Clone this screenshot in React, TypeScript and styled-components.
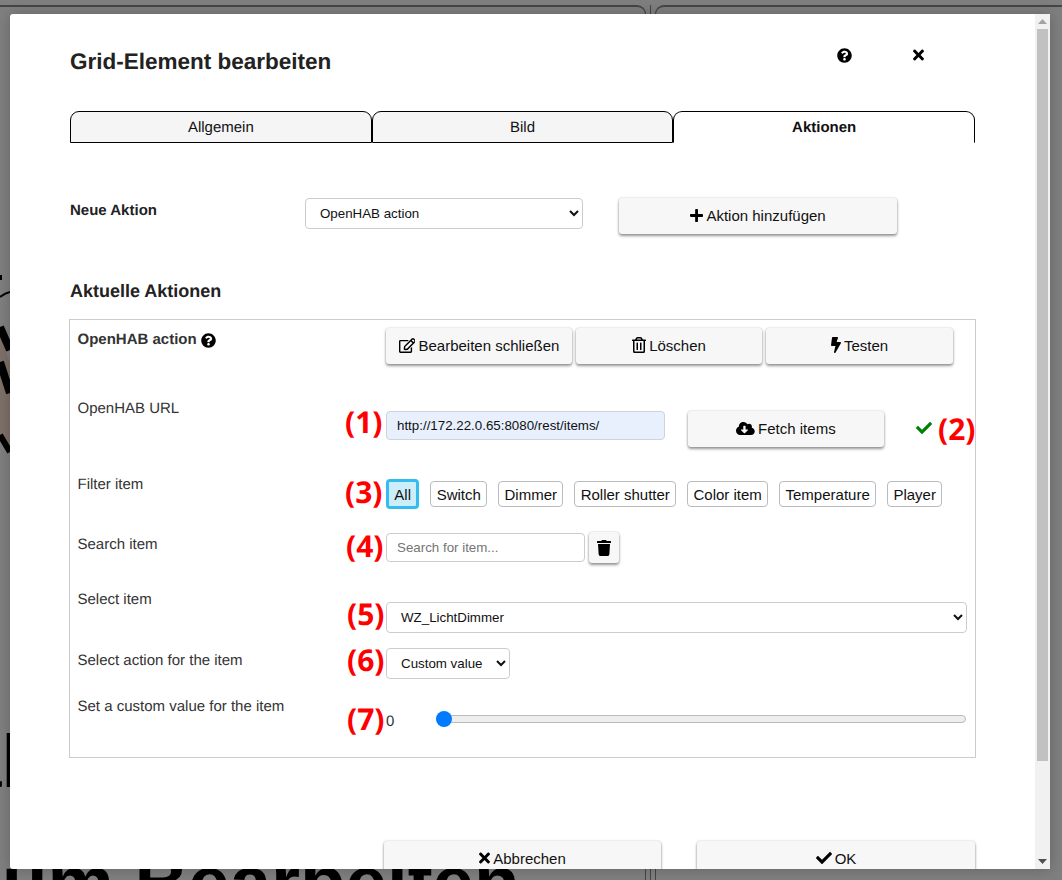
import React from "react";
import styled, { createGlobalStyle } from "styled-components";
import {
  FaBolt,
  FaCheck,
  FaCloudDownloadAlt,
  FaPlus,
  FaQuestionCircle,
  FaRegEdit,
  FaRegTrashAlt,
  FaTimes,
  FaTrash,
} from "react-icons/fa";

const Global = createGlobalStyle`
  html, body { margin: 0; padding: 0; height: 100%; overflow: hidden; }
  body {
    font-family: "Liberation Sans", Arial, sans-serif;
    font-size: 15px;
    color: #222;
    text-rendering: geometricPrecision;
  }
  * { box-sizing: border-box; }
`;

const Backdrop = styled.div`
  position: fixed;
  inset: 0;
  display: flex;
  padding-top: 5px;
  background: #7f7f7f;
  overflow: hidden;
`;
const LeftCard = styled.div`
  position: relative;
  width: 646px;
  flex: none;
  border-top: 2px solid #454545;
  border-right: 1px solid #454545;
  border-top-right-radius: 9px;
`;
const Divider = styled.div`
  width: 1px;
  flex: none;
  margin: 0 4px;
  background: #454545;
`;
const RightCard = styled.div`
  flex: 1;
  border-top: 2px solid #454545;
  border-left: 1px solid #454545;
  border-top-left-radius: 9px;
`;
const BigLine = styled.div<{ $top: number; $left: number }>`
  position: absolute;
  top: ${(p) => p.$top}px;
  left: ${(p) => p.$left}px;
  font-size: 74.5px;
  font-weight: 700;
  line-height: 86px;
  white-space: nowrap;
  color: #000;
`;
const BackLogo = styled.svg`
  position: absolute;
  left: 0;
  top: 258px;
`;

const Modal = styled.div`
  position: fixed;
  left: 10px;
  top: 14px;
  width: 1040px;
  height: 855px;
  display: flex;
  background: #fff;
  border-radius: 3px 0 0 3px;
  box-shadow: 0 0 14px rgba(0, 0, 0, 0.22);
  overflow: hidden;
`;
const Content = styled.div`
  flex: 1;
  min-width: 0;
  height: 963px;
  padding: 34px 60px 0 60px;
`;
const Rail = styled.div`
  width: 15px;
  flex: none;
  display: flex;
  flex-direction: column;
  background: #f1f1f1;
`;
const RailEnd = styled.div`
  height: 15px;
  display: flex;
  align-items: center;
  justify-content: center;
  flex: none;
`;
const Thumb = styled.div`
  width: 11px;
  height: 732px;
  margin-left: 2px;
  flex: none;
  background: #c1c1c1;
`;
const RailGap = styled.div`
  flex: 1;
`;
const Header = styled.div`
  display: flex;
  align-items: flex-start;
  height: 28px;
`;
const Title = styled.h1`
  flex: 1;
  margin: 0;
  font-size: 22.5px;
  line-height: 28px;
  font-weight: 700;
  color: #222;
`;
const HeaderIcons = styled.div`
  display: flex;
  gap: 61px;
  margin-right: 51px;
  margin-top: -1px;
  height: 16px;
  align-items: center;
`;
const Tabs = styled.div`
  display: flex;
  margin-top: 35px;
`;
const Tab = styled.div<{ $active?: boolean }>`
  flex: 1;
  height: 32px;
  line-height: 32px;
  text-align: center;
  font-size: 15px;
  color: #111;
  border: 1px solid #000;
  border-radius: 9px 9px 0 0;
  background: ${(p) => (p.$active ? "#fff" : "#f5f5f5")};
  font-weight: ${(p) => (p.$active ? 700 : 400)};
  border-bottom-color: ${(p) => (p.$active ? "transparent" : "#000")};
`;
const NewRow = styled.div`
  display: flex;
  align-items: flex-start;
  margin-top: 55px;
`;
const NewLabel = styled.div`
  width: 235px;
  padding-top: 3px;
  font-weight: 700;
  line-height: 20px;
  color: #222;
`;
const Select = styled.select<{ $width: number }>`
  display: block;
  width: ${(p) => p.$width}px;
  height: 31px;
  padding: 0 10px;
  font-family: "Liberation Sans", Arial, sans-serif;
  font-size: 13.33px;
  color: #111;
  background: #fff;
  border: 1px solid #ccc;
  border-radius: 4px;
`;
const Button = styled.button<{ $width: number; $ml?: number }>`
  display: flex;
  align-items: center;
  justify-content: center;
  gap: 3px;
  width: ${(p) => p.$width}px;
  height: 36px;
  margin-left: ${(p) => p.$ml ?? 0}px;
  padding: 0 0 2px;
  flex: none;
  border: none;
  border-radius: 3px;
  background: #f7f7f7;
  color: #111;
  font-family: "Liberation Sans", Arial, sans-serif;
  font-size: 15px;
  box-shadow: 0 2px 3px rgba(0, 0, 0, 0.4), 0 0 2px rgba(0, 0, 0, 0.22);
`;
const BlackIcon = styled.span<{ $size: number; $ratio?: number }>`
  display: inline-flex;
  color: #000;
  svg {
    width: ${(p) => p.$size * (p.$ratio ?? 1)}px;
    height: ${(p) => p.$size}px;
  }
`;
const SectionTitle = styled.h2`
  margin: 45px 0 16px;
  font-size: 18px;
  line-height: 24px;
  font-weight: 700;
  color: #222;
`;
const ActionBox = styled.div`
  margin-left: -1px;
  width: 907px;
  padding: 8px 8px 25px 7.5px;
  border: 1px solid #ccc;
`;
const Row = styled.div<{ $mt?: number }>`
  display: grid;
  grid-template-columns: 308.5px 1fr;
  align-items: start;
  margin-top: ${(p) => p.$mt ?? 0}px;
`;
const Label = styled.div<{ $pad?: number; $bold?: boolean }>`
  padding-top: ${(p) => p.$pad ?? 0}px;
  line-height: 20px;
  color: #333;
  font-weight: ${(p) => (p.$bold ? 700 : 400)};
  display: flex;
  align-items: center;
  gap: 4px;
`;
const Value = styled.div<{ $pad?: number }>`
  position: relative;
  padding-top: ${(p) => p.$pad ?? 0}px;
  display: flex;
  align-items: flex-start;
`;
const Note = styled.span<{ $top: number; $left: number }>`
  position: absolute;
  top: ${(p) => p.$top}px;
  left: ${(p) => p.$left}px;
  font-family: "Noto Sans", "Open Sans", sans-serif;
  font-weight: 700;
  font-size: 30px;
  line-height: 40px;
  color: #f00;
  white-space: nowrap;
`;
const TextInput = styled.input<{ $width: number; $filled?: boolean; $mt?: number }>`
  width: ${(p) => p.$width}px;
  height: 29px;
  margin-top: ${(p) => p.$mt ?? 0}px;
  padding: 0 10px;
  font-family: "Liberation Sans", Arial, sans-serif;
  font-size: 13.33px;
  color: #111;
  background: ${(p) => (p.$filled ? "#e8f0fe" : "#fff")};
  border: 1px solid ${(p) => (p.$filled ? "#ced4da" : "#ccc")};
  border-radius: 4px;
  outline: none;
  &::placeholder { color: #757575; }
`;
const Buttons = styled.div`
  display: flex;
  gap: 4px;
`;
const OkMark = styled.span`
  display: inline-flex;
  margin: 9px 0 0 32px;
  font-size: 16px;
  color: #008000;
`;
const Chips = styled.div`
  display: flex;
  align-items: center;
  gap: 11px;
  height: 30px;
`;
const Chip = styled.button<{ $active?: boolean }>`
  padding: 0 5.33px;
  height: ${(p) => (p.$active ? 30 : 26)}px;
  font-family: "Liberation Sans", Arial, sans-serif;
  font-size: 15px;
  color: #111;
  background: ${(p) => (p.$active ? "#cceefb" : "#fff")};
  border: ${(p) => (p.$active ? "3px solid #33bcee" : "1px solid #bbb")};
  border-radius: 4px;
`;
const SquareButton = styled(Button)`
  height: 31px;
  margin-left: 4px;
  margin-top: 1px;
  padding: 0;
`;
const ValueText = styled.span`
  width: 50px;
  line-height: 20px;
  margin-top: 3px;
  color: #333;
`;
const Slider = styled.input`
  appearance: none;
  width: 530px;
  height: 20px;
  margin: 0;
  background: transparent;
  &::-webkit-slider-runnable-track {
    height: 8px;
    background: #eee;
    border: 1px solid #bbb;
    border-radius: 4px;
  }
  &::-webkit-slider-thumb {
    appearance: none;
    width: 16px;
    height: 16px;
    margin-top: -5px;
    margin-left: -1px;
    border-radius: 50%;
    background: #007bff;
  }
`;
const Footer = styled.div`
  display: flex;
  margin: 83px 0 0 314px;
`;

const filters = ["Switch", "Dimmer", "Roller shutter", "Color item", "Temperature", "Player"];

export default function App() {
  return (
    <>
      <Global />
      <Backdrop>
        <LeftCard>
          <BackLogo width="10" height="200" viewBox="0 0 10 200">
            <path d="M0 70 L10 98 L10 185 L0 170 Z" fill="#7d7068" />
            <rect x="0" y="10" width="2" height="5" fill="#000" />
            <path d="M0 32 Q5 28 10 27" stroke="#000" strokeWidth="2" fill="none" />
            <path d="M0 62 L10 85" stroke="#000" strokeWidth="8" fill="none" />
            <path d="M0 97 L10 128" stroke="#000" strokeWidth="8" fill="none" />
            <path d="M0 170 L10 187" stroke="#000" strokeWidth="6" fill="none" />
          </BackLogo>
          <BigLine $top={712} $left={-40}>al</BigLine>
          <BigLine $top={833} $left={2}>um Bearbeiten</BigLine>
        </LeftCard>
        <Divider />
        <RightCard />
      </Backdrop>
      <Modal>
        <Content>
          <Header>
            <Title>Grid-Element bearbeiten</Title>
            <HeaderIcons>
              <BlackIcon $size={15}><FaQuestionCircle /></BlackIcon>
              <BlackIcon $size={16} $ratio={0.6875}><FaTimes /></BlackIcon>
            </HeaderIcons>
          </Header>
          <Tabs>
            <Tab>Allgemein</Tab>
            <Tab>Bild</Tab>
            <Tab $active>Aktionen</Tab>
          </Tabs>
          <NewRow>
            <NewLabel>Neue Aktion</NewLabel>
            <Select $width={278} defaultValue="OpenHAB action">
              <option>OpenHAB action</option>
            </Select>
            <Button $width={278} $ml={36}>
              <BlackIcon $size={15} $ratio={0.875}><FaPlus /></BlackIcon>
              Aktion hinzufügen
            </Button>
          </NewRow>
          <SectionTitle>Aktuelle Aktionen</SectionTitle>
          <ActionBox>
            <Row>
              <Label $pad={2} $bold>
                OpenHAB action
                <BlackIcon $size={15}><FaQuestionCircle /></BlackIcon>
              </Label>
              <Buttons>
                <Button $width={186}>
                  <BlackIcon $size={15} $ratio={1.125}><FaRegEdit /></BlackIcon>
                  Bearbeiten schließen
                </Button>
                <Button $width={186}>
                  <BlackIcon $size={16} $ratio={0.875}><FaRegTrashAlt /></BlackIcon>
                  Löschen
                </Button>
                <Button $width={187}>
                  <BlackIcon $size={16} $ratio={0.625}><FaBolt /></BlackIcon>
                  Testen
                </Button>
              </Buttons>
            </Row>
            <Row $mt={33}>
              <Label $pad={2}>OpenHAB URL</Label>
              <Value $pad={14}>
                <Note $top={5} $left={-41}>(1)</Note>
                <TextInput $width={279} $filled defaultValue="http://172.22.0.65:8080/rest/items/" />
                <Button $width={196} $ml={23}>
                  <BlackIcon $size={15} $ratio={1.25}><FaCloudDownloadAlt /></BlackIcon>
                  Fetch items
                </Button>
                <OkMark><FaCheck /></OkMark>
                <Note $top={12} $left={552}>(2)</Note>
              </Value>
            </Row>
            <Row $mt={26}>
              <Label $pad={2}>Filter item</Label>
              <Value $pad={6}>
                <Note $top={-1} $left={-41}>(3)</Note>
                <Chips>
                  <Chip $active>All</Chip>
                  {filters.map((f) => (
                    <Chip key={f}>{f}</Chip>
                  ))}
                </Chips>
              </Value>
            </Row>
            <Row $mt={22}>
              <Label $pad={4}>Search item</Label>
              <Value>
                <Note $top={-5} $left={-40}>(4)</Note>
                <TextInput $width={199} $mt={2} placeholder="Search for item..." />
                <SquareButton $width={30}>
                  <BlackIcon $size={16} $ratio={0.875}><FaTrash /></BlackIcon>
                </SquareButton>
              </Value>
            </Row>
            <Row $mt={26}>
              <Label $pad={1}>Select item</Label>
              <Value $pad={13}>
                <Note $top={5} $left={-39}>(5)</Note>
                <Select $width={581} defaultValue="WZ_LichtDimmer">
                  <option>WZ_LichtDimmer</option>
                </Select>
              </Value>
            </Row>
            <Row $mt={15}>
              <Label $pad={3}>Select action for the item</Label>
              <Value>
                <Note $top={-8} $left={-39}>(6)</Note>
                <Select $width={124} defaultValue="Custom value">
                  <option>Custom value</option>
                </Select>
              </Value>
            </Row>
            <Row $mt={17}>
              <Label $pad={1}>Set a custom value for the item</Label>
              <Value $pad={13}>
                <Note $top={3} $left={-39}>(7)</Note>
                <ValueText>0</ValueText>
                <Slider type="range" min={0} max={100} defaultValue={0} />
              </Value>
            </Row>
          </ActionBox>
          <Footer>
            <Button $width={277}>
              <BlackIcon $size={16} $ratio={0.6875}><FaTimes /></BlackIcon>
              Abbrechen
            </Button>
            <Button $width={278} $ml={36}>
              <BlackIcon $size={16}><FaCheck /></BlackIcon>
              OK
            </Button>
          </Footer>
        </Content>
        <Rail aria-hidden="true">
          <RailEnd>
            <svg width="9" height="5" viewBox="0 0 9 5"><path d="M4.5 0 L9 5 L0 5 Z" fill="#a3a3a3" /></svg>
          </RailEnd>
          <Thumb />
          <RailGap />
          <RailEnd>
            <svg width="9" height="5" viewBox="0 0 9 5"><path d="M0 0 L9 0 L4.5 5 Z" fill="#505050" /></svg>
          </RailEnd>
        </Rail>
      </Modal>
    </>
  );
}
